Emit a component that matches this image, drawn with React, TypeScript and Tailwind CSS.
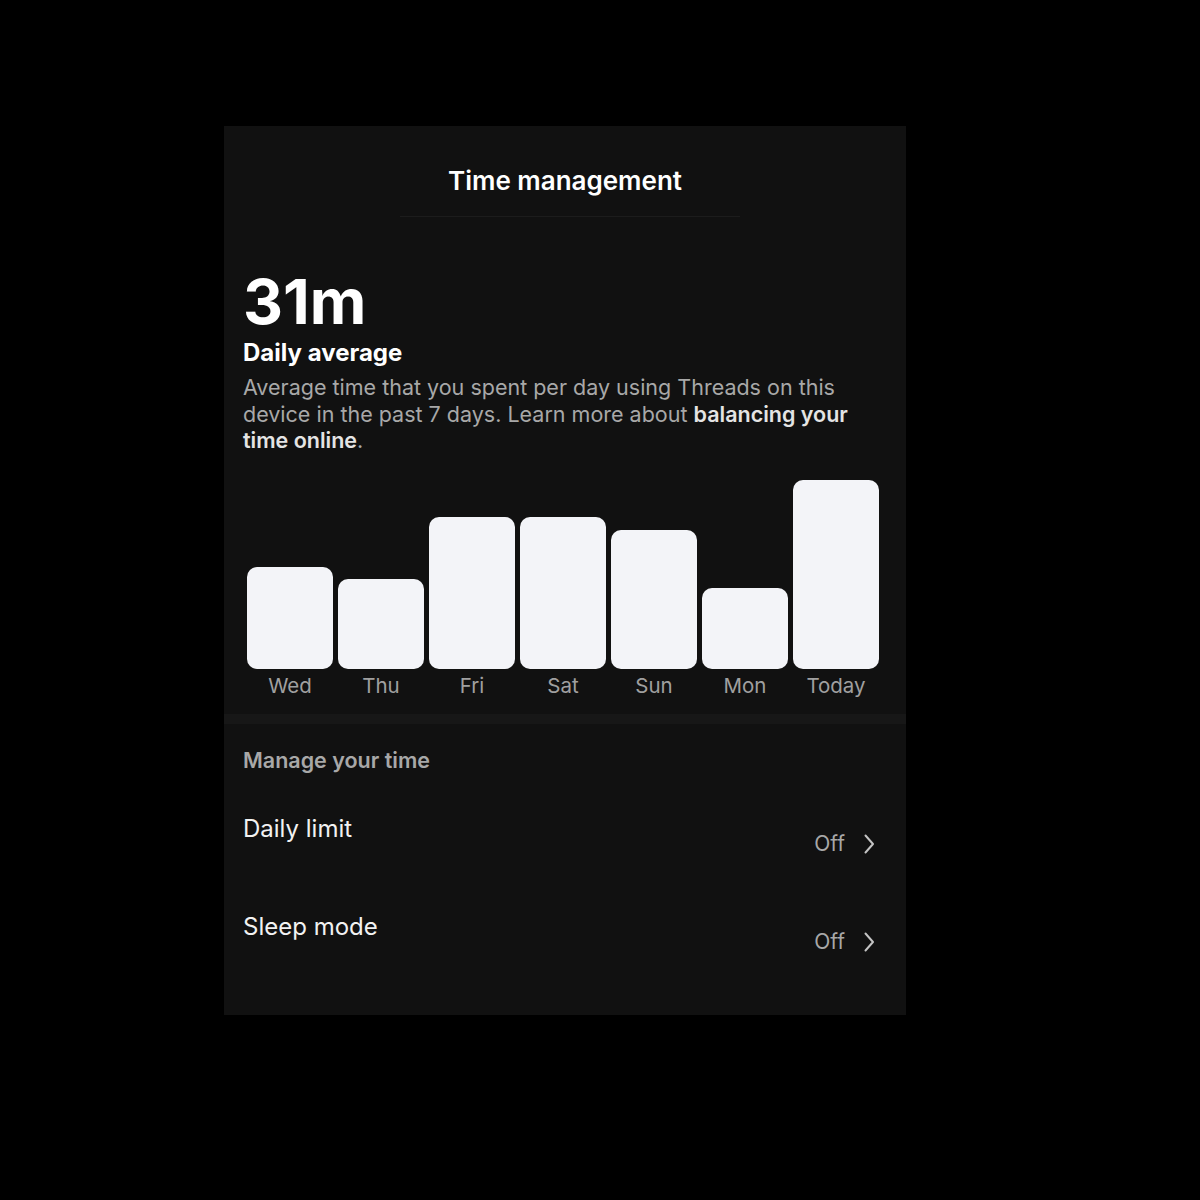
import React from 'react';

const days = [
  { label: 'Wed', height: 102 },
  { label: 'Thu', height: 90 },
  { label: 'Fri', height: 152 },
  { label: 'Sat', height: 152 },
  { label: 'Sun', height: 139 },
  { label: 'Mon', height: 81 },
  { label: 'Today', height: 189 },
];

const Chevron: React.FC = () => (
  <svg width="14" height="22" viewBox="0 0 14 22" fill="none" className="text-[#c4c4c4]">
    <path d="M3.5 2.5 L11 11 L3.5 19.5" stroke="currentColor" strokeWidth="2" strokeLinecap="round" strokeLinejoin="round" />
  </svg>
);

const SettingRow: React.FC<{ title: string; value: string }> = ({ title, value }) => (
  <div className="h-[98px] flex justify-between items-start">
    <span className="text-[24px] leading-[28px] text-[#f2f2f2]">{title}</span>
    <div className="mt-[15px] mr-[11px] flex items-center gap-[17px]">
      <span className="text-[21px] leading-[28px] text-[#a8a8a8]">{value}</span>
      <Chevron />
    </div>
  </div>
);

const App: React.FC = () => {
  return (
    <div className="w-[1200px] h-[1200px] bg-black pt-[126px] font-['Inter',sans-serif] antialiased">
      <div className="ml-[224px] w-[682px] h-[889px] bg-[#111111] flex flex-col">
        <header className="h-[91px] flex flex-col items-center">
          <h1 className="pt-[41px] text-[26px] leading-[28px] font-semibold text-white">Time management</h1>
          <div className="mt-auto ml-[10px] w-[340px] h-px bg-[#1c1c1c]" />
        </header>

        <section className="px-[19px]">
          <p className="mt-[54px] text-[62px] leading-[62px] font-bold text-white">31m</p>
          <h2 className="mt-[6px] text-[24px] leading-[28px] font-bold text-white">Daily average</h2>
          <p className="mt-[7px] max-w-[630px] text-[21.5px] leading-[26.5px] text-[#a8a8a8]">
            Average time that you spent per day using Threads on this device in the past 7 days. Learn more about{' '}
            <span className="font-semibold text-[#e4e4e4]">balancing your time online</span>.
          </p>

          <div className="mt-[26px] ml-[4px] w-[632px]">
            <div className="grid grid-cols-7 gap-[5px] h-[189px] items-end">
              {days.map((d) => (
                <div key={d.label} className="rounded-[10px] bg-[#f3f4f8]" style={{ height: d.height }} />
              ))}
            </div>
            <div className="mt-[5px] grid grid-cols-7 gap-[5px]">
              {days.map((d) => (
                <span key={d.label} className="text-center text-[20.5px] leading-[24px] text-[#a0a0a0]">
                  {d.label}
                </span>
              ))}
            </div>
          </div>
        </section>

        <div className="mt-[16px] h-[10px] bg-[#171717]" />

        <section className="px-[19px]">
          <p className="mt-[24px] text-[21.5px] leading-[24px] font-semibold text-[#a8a8a8]">Manage your time</p>
          <div className="mt-[43px]">
            <SettingRow title="Daily limit" value="Off" />
            <SettingRow title="Sleep mode" value="Off" />
          </div>
        </section>
      </div>
    </div>
  );
};

export default App;
